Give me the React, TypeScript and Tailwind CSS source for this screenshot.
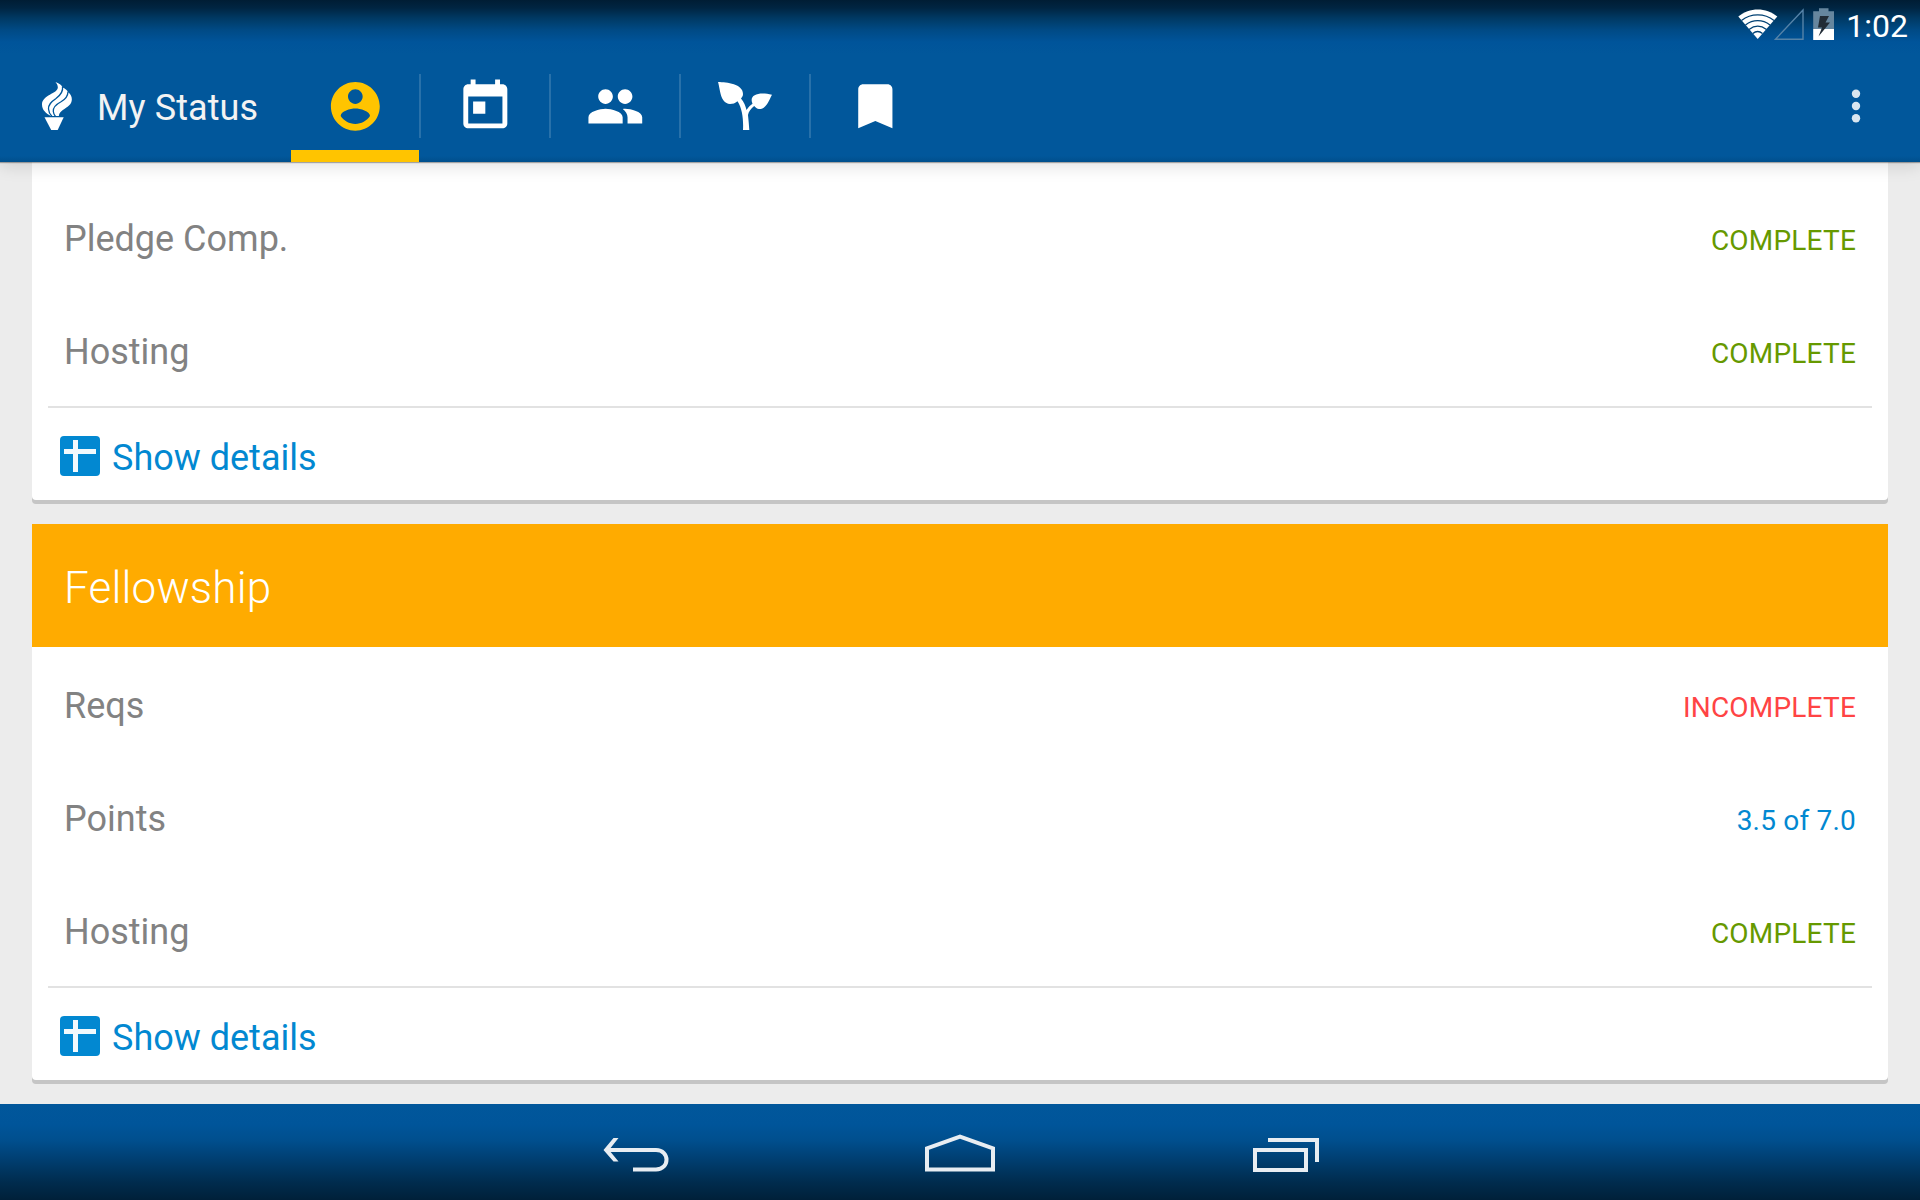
import type { ReactNode } from "react";

type Tone = "complete" | "incomplete" | "points";

const toneClass: Record<Tone, string> = {
  complete: "text-[#669900]",
  incomplete: "text-[#ff4444]",
  points: "text-[#0288d1]",
};

function MaterialIcon({ d }: { d: string }) {
  return (
    <svg viewBox="0 0 24 24" className="size-[58.67px]" fill="currentColor">
      <path d={d} />
    </svg>
  );
}

const ACCOUNT =
  "M12 2C6.48 2 2 6.48 2 12s4.48 10 10 10 10-4.48 10-10S17.52 2 12 2zm0 3c1.66 0 3 1.34 3 3s-1.34 3-3 3-3-1.34-3-3 1.34-3 3-3zm0 14.2c-2.5 0-4.71-1.28-6-3.22.03-1.99 4-3.08 6-3.08 1.99 0 5.97 1.09 6 3.08-1.29 1.94-3.5 3.22-6 3.22z";
const TODAY =
  "M19 3h-1V1h-2v2H8V1H6v2H5c-1.11 0-1.99.9-1.99 2L3 19c0 1.1.89 2 2 2h14c1.1 0 2-.9 2-2V5c0-1.1-.9-2-2-2zm0 16H5V8h14v11zM7 10h5v5H7z";
const PEOPLE =
  "M16 11c1.66 0 2.99-1.34 2.99-3S17.66 5 16 5c-1.66 0-3 1.34-3 3s1.34 3 3 3zm-8 0c1.66 0 2.99-1.34 2.99-3S9.66 5 8 5C6.34 5 5 6.34 5 8s1.34 3 3 3zm0 2c-2.33 0-7 1.17-7 3.5V19h14v-2.5c0-2.33-4.67-3.5-7-3.5zm8 0c-.29 0-.62.02-.97.05 1.16.84 1.97 1.97 1.97 3.45V19h6v-2.5c0-2.33-4.67-3.5-7-3.5z";
const BOOKMARK =
  "M17 3H7c-1.1 0-1.99.9-1.99 2L5 21l7-3 7 3V5c0-1.1-.9-2-2-2z";

function Torch() {
  return (
    <svg viewBox="0 0 30 48" className="h-[48px] w-[30px]">
      <path
        d="M13.500 0C17.500 1.500 20 3.500 20.700 5.500C23.500 6.500 25.500 8.500 26.300 10.500C30.800 13.500 31 20 27 23.500C23.500 27 17.500 28.500 16.800 33.900H9C4 31.500 0 28 0 22.500C0 12.500 16.500 11.500 15.800 5C15.600 3 14.800 1.500 13.500 0Z"
        fill="white"
      />
      <g fill="none" stroke="#01579b" strokeWidth="1.300">
        <path d="M20.500 4.500C21.500 10 18 13.500 14 16.500C9 20 6.300 22.500 6.500 27C6.700 30 8 32.500 10 34.500" />
        <path d="M26 9.500C26 14.500 23 17.500 19 19.800C14 22.500 10.800 25 11.300 29.500C11.600 32 12.500 33.300 13.500 34.500" />
      </g>
      <path d="M2.500 35.200H21.700L15.700 48H9.200Z" fill="white" />
    </svg>
  );
}

function Sprout() {
  return (
    <svg viewBox="0 0 54 48" className="h-[48px] w-[54px]" fill="white">
      <path d="M0 0C9 0.200 25 2 25 12C25 14 24 15.300 23 16.500C26 20 27.500 24 28.500 28C30.500 25 32.300 23.200 34.500 21.800C30.500 12.500 41 9.500 54 12.700C50.500 19 48.500 27 41 27C39 27 37.500 25.500 36.200 24C33 26.500 30.500 29.500 30 33C30.500 38 31 43 31.300 48H25C25.500 38 24.500 27 19.500 19.300C17 21.500 15 22 12 22C2 21 2.500 8 0 0Z" />
    </svg>
  );
}

function Tab({ children, active, first }: { children: ReactNode; active?: boolean; first?: boolean }) {
  return (
    <div className="flex h-full">
      {!first && <div className="mt-[24px] h-[64px] w-[2px] bg-[#2871aa]" />}
      <div
        className={
          active
            ? "flex h-full w-[128px] items-center justify-center border-b-[12px] border-[#ffc400] pt-[12px] text-[#ffc400]"
            : "flex h-full w-[128px] items-center justify-center text-white"
        }
      >
        {children}
      </div>
    </div>
  );
}

function StatusBar() {
  return (
    <div className="flex h-[50px] items-start justify-end pr-[12px]">
      <svg viewBox="0 0 100 42" className="h-[42px] w-[100px]">
        <path d="M20.700 39L1.300 16.500C12.500 7 29 7 40.300 16.500Z" fill="white" />
        <g fill="none" stroke="#004173" strokeWidth="1.300">
          <path d="M4.500 20.500C14 13 27.500 13 37 20.500" />
          <path d="M8.500 25C16 19.200 25.500 19.200 33 25" />
          <path d="M12 29.500C17.500 25.300 24 25.300 29.500 29.500" />
          <path d="M15.800 33.500C18.800 31 22.500 31 25.500 33.500" />
        </g>
        <path d="M38.500 39.200L66 10V39.200Z" fill="none" stroke="#5583a8" strokeWidth="1.400" />
        <path d="M76.200 11.200H82V8.200H91.500V11.200H97V29H76.200Z" fill="#66869e" />
        <path d="M76.200 29H97V40H76.200Z" fill="white" />
        <path d="M83 16H92L88.500 22.500H93L81.500 36.500L85 27.500H81Z" fill="#222c36" />
      </svg>
      <span className="ml-[9px] mt-[7px] text-[32px] leading-[38px] text-white">1:02</span>
    </div>
  );
}

function Row({ label, value, tone }: { label: string; value: string; tone: Tone }) {
  return (
    <div className="flex h-[113px] items-center justify-between px-[32px] pt-[5px]">
      <span className="text-[36px] leading-[42px] text-[#828282]">{label}</span>
      <span className={"pt-[4px] text-[28px] leading-[32px] tracking-[0.2px] " + toneClass[tone]}>{value}</span>
    </div>
  );
}

function Details() {
  return (
    <div className="mx-[16px] flex h-[94px] items-center border-t-2 border-[#e2e2e2] pl-[12px] pt-[4px]">
      <svg viewBox="0 0 40 40" className="size-[40px]">
        <rect width="40" height="40" rx="4" fill="#0288d1" />
        <path d="M13 4H18V13H36V18H18V36H13V18H4V13H13Z" fill="#f2f9fd" />
      </svg>
      <span className="ml-[12px] mt-[3px] text-[36px] leading-[42px] text-[#0288d1]">Show details</span>
    </div>
  );
}

export default function App() {
  return (
    <div className="flex h-[1200px] w-[1920px] flex-col overflow-hidden bg-[#ececec] font-[Roboto,sans-serif]">
      <header className="relative z-10 h-[162px] shrink-0 bg-[#01579b] bg-[linear-gradient(to_bottom,#001d34_0px,#002542_8px,#003963_18px,#004a85_30px,#00549a_42px,#01579b_54px,#01579b_156px,#004f8c_162px)] shadow-[0_1px_1px_rgba(0,0,0,0.3),0_4px_16px_rgba(0,0,0,0.13)]">
        <StatusBar />
        <div className="flex h-[112px] items-center">
          <div className="flex w-[291px] items-center pl-[42px]">
            <Torch />
            <span className="ml-[25px] pt-[4px] text-[36px] leading-[42px] tracking-[0.1px] text-[#f3f3f3]">My Status</span>
          </div>
          <Tab active first><MaterialIcon d={ACCOUNT} /></Tab>
          <Tab><MaterialIcon d={TODAY} /></Tab>
          <Tab><MaterialIcon d={PEOPLE} /></Tab>
          <Tab><Sprout /></Tab>
          <Tab><MaterialIcon d={BOOKMARK} /></Tab>
          <svg viewBox="0 0 10 36" className="ml-auto mr-[59px] h-[36px] w-[10px]" fill="#d9e6f0">
            <circle cx="5" cy="5.700" r="4.200" />
            <circle cx="5" cy="18" r="4.200" />
            <circle cx="5" cy="30.300" r="4.200" />
          </svg>
        </div>
      </header>

      <main className="flex h-[942px] flex-col gap-[24px] px-[32px]">
        <section className="h-[338px] rounded-b-[4px] bg-white pt-[18px] shadow-[0_4px_0_#c5c5c5]">
          <Row label="Pledge Comp." value="COMPLETE" tone="complete" />
          <Row label="Hosting" value="COMPLETE" tone="complete" />
          <Details />
        </section>
        <section className="h-[556px] rounded-b-[4px] bg-white shadow-[0_4px_0_#c5c5c5]">
          <h2 className="flex h-[123px] items-center bg-[#ffab00] pl-[32px] pt-[4px] text-[44px] font-light leading-[52px] tracking-[0.2px] text-white">
            Fellowship
          </h2>
          <Row label="Reqs" value="INCOMPLETE" tone="incomplete" />
          <Row label="Points" value="3.5 of 7.0" tone="points" />
          <Row label="Hosting" value="COMPLETE" tone="complete" />
          <Details />
        </section>
      </main>

      <nav className="flex h-[96px] justify-center bg-[linear-gradient(to_bottom,#01579b_0px,#00559a_20px,#004f8e_36px,#003e70_56px,#002c4e_78px,#002039_96px)]">
        <svg viewBox="0 0 720 96" className="h-[96px] w-[720px]" fill="none" stroke="#e8edf2" strokeWidth="4">
          <path d="M7 46H56C70 46 70 65.500 56 65.500H33" />
          <path d="M18.500 34H13.500L3.500 46L13.500 57.500H18.500L9 46Z" fill="#e8edf2" stroke="none" />
          <path d="M327 44.300L360 32.700L393 44.300V65.500H327Z" />
          <path d="M655 66H706V46H655ZM668 36H717V58" />
        </svg>
      </nav>
    </div>
  );
}
